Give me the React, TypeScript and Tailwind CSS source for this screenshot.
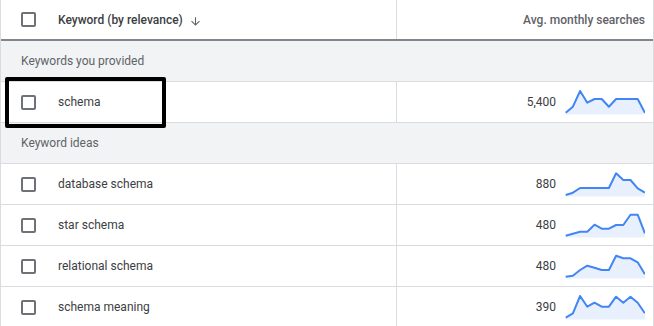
type Row = { keyword: string; searches: string; trend: number[] };

const provided: Row[] = [
  { keyword: "schema", searches: "5,400", trend: [22.7, 16.7, 1, 12.7, 9, 9, 16.7, 9, 9, 9, 9, 22.7] },
];

const ideas: Row[] = [
  { keyword: "database schema", searches: "880", trend: [23, 20.7, 16, 16, 16, 16, 16, 1.3, 8, 8, 16.3, 20.7] },
  { keyword: "star schema", searches: "480", trend: [22.7, 20.7, 18.7, 18.7, 11.7, 15.7, 15.7, 12, 12, 1.7, 1.7, 20.3] },
  { keyword: "relational schema", searches: "480", trend: [22.7, 21.7, 16, 11.7, 13.7, 16, 16, 1.7, 4.3, 4.3, 8.3, 20.3] },
  { keyword: "schema meaning", searches: "390", trend: [22.7, 18.3, 1, 11.7, 7.7, 11.7, 11.7, 1.7, 7.7, 1.7, 7.7, 18.3] },
];

const Checkbox = () => (
  <div className="w-[15px] h-[15px] shrink-0 rounded-[2px] border-2 border-[#6e7175]" />
);

const ArrowDown = () => (
  <svg width="13" height="13" viewBox="0 0 24 24" fill="#5f6368" className="ml-[6px] mt-[3px]">
    <path d="M20 12l-1.41-1.41L13 16.17V4h-2v12.17l-5.58-5.59L4 12l8 8 8-8z" />
  </svg>
);

// 12 monthly points, sparkline area chart
const Sparkline = ({ ys }: { ys: number[] }) => {
  const pts = ys.map((y, i) => `${(0.7 + i * 7.2).toFixed(1)},${y}`).join(" ");
  return (
    <svg width="80" height="25" viewBox="0 0 80 25" className="block shrink-0">
      <polygon points={`0.7,24.6 ${pts} 79.9,24.6`} fill="#e8f0fe" />
      <polyline points={pts} fill="none" stroke="#4285f4" strokeWidth="2" strokeLinejoin="round" />
    </svg>
  );
};

const SectionRow = ({ label }: { label: string }) => (
  <div className="h-[41px] flex items-center pl-5 bg-[#f1f3f4] border-b border-[#dadce0] text-[12px] text-[#5f6368]">
    {label}
  </div>
);

const KeywordRow = ({ row }: { row: Row }) => (
  <div className="h-[41px] flex border-b border-[#dadce0]">
    <div className="w-[396px] shrink-0 flex items-center pl-5 border-r border-[#dadce0]">
      <Checkbox />
      <span className="ml-[22px] text-[12px] text-[#3c4043]">{row.keyword}</span>
    </div>
    <div className="flex-1 flex items-center justify-end gap-[9px] pr-2">
      <span className="text-[12px] text-[#3c4043]">{row.searches}</span>
      <Sparkline ys={row.trend} />
    </div>
  </div>
);

export default function App() {
  return (
    <div className="w-[654px] h-[326px] overflow-hidden bg-white font-['Roboto',sans-serif]">
      <div className="relative w-[654px] border-l border-r border-[#dadce0]">
        {/* Header */}
        <div className="h-[41px] flex border-b-2 border-[#80868b]">
          <div className="w-[396px] shrink-0 flex items-center pl-5 border-r border-[#dadce0]">
            <Checkbox />
            <span className="ml-[22px] text-[12px] font-medium text-[#3c4043]">Keyword (by relevance)</span>
            <ArrowDown />
          </div>
          <div className="flex-1 flex items-center justify-end pr-2">
            <span className="text-[12px] font-medium text-[#5f6368]">Avg. monthly searches</span>
          </div>
        </div>

        <SectionRow label="Keywords you provided" />
        {provided.map((r) => (
          <KeywordRow key={r.keyword} row={r} />
        ))}

        <SectionRow label="Keyword ideas" />
        {ideas.map((r) => (
          <KeywordRow key={r.keyword} row={r} />
        ))}

        {/* Highlight annotation */}
        <div className="absolute left-[4px] top-[77px] w-[161px] h-[51px] border-4 border-black rounded-[2px] pointer-events-none" />
      </div>
    </div>
  );
}
